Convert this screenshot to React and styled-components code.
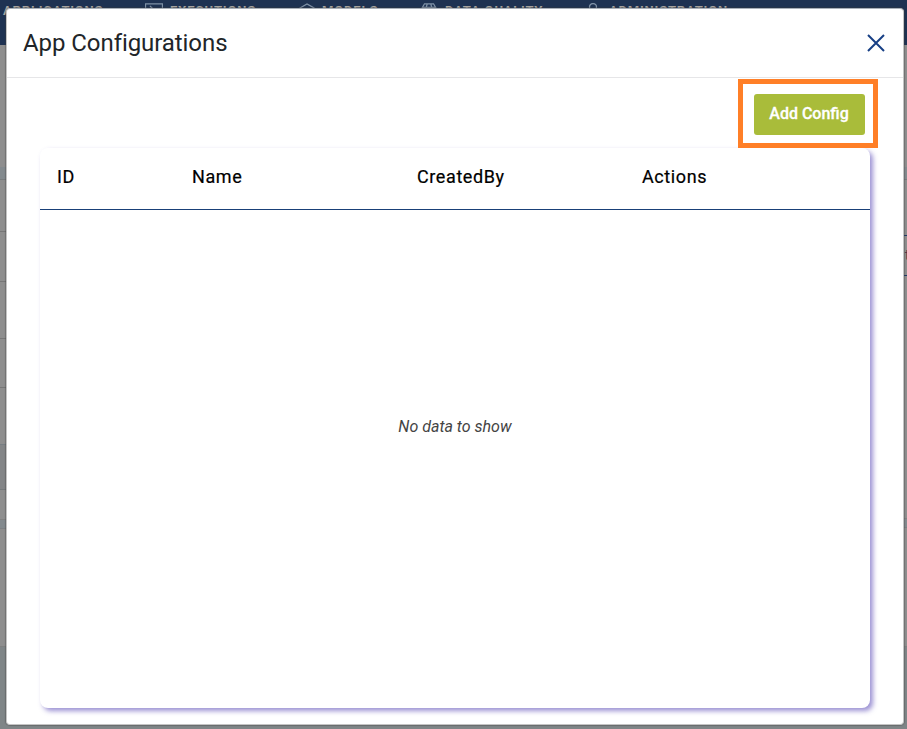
import React from "react";
import styled, { createGlobalStyle } from "styled-components";

const GlobalStyle = createGlobalStyle`
  * { box-sizing: border-box; }
  body {
    margin: 0;
    font-family: Roboto, "Liberation Sans", sans-serif;
    overflow: hidden;
  }
`;

const Page = styled.div`
  position: relative;
  width: 907px;
  height: 729px;
  overflow: hidden;
  background: #7f8587;
`;

const NavBar = styled.nav`
  display: flex;
  height: 45px;
  padding: 3px 0 0 3px;
  background: #1e3252;
`;

const NavItem = styled.span`
  display: flex;
  flex: none;
  gap: ${(p) => p.$gap || 0}px;
  width: ${(p) => p.$width}px;
  height: 16px;
  color: #aaa7a2;
  font-size: 13px;
  font-weight: 700;
  line-height: 16px;
  white-space: nowrap;

  svg {
    flex: none;
    color: #7f91a6;
  }
`;

const NavLabel = styled.span`
  display: block;
  letter-spacing: ${(p) => p.$spacing || 0}px;
`;

const Backdrop = styled.main`
  display: flex;
  justify-content: space-between;
`;

const Side = styled.div`
  width: ${(p) => p.$width}px;
`;

const Band = styled.div`
  height: ${(p) => p.$height}px;
  background: ${(p) => p.$color || "#8e8e8e"};
  border-bottom: ${(p) => (p.$line ? `1px solid ${p.$line}` : "none")};
`;

const Field = styled.div`
  height: 41px;
  padding: 11px 0 0 1px;
  overflow: hidden;
  background: #8e8e8e;
  border-top: 1px solid #203a66;
  border-bottom: 1px solid #203a66;
  color: #563247;
  font-size: 14px;
  line-height: 16px;
`;

const Modal = styled.section`
  position: absolute;
  top: 8px;
  left: 6px;
  display: flex;
  flex-direction: column;
  width: 898px;
  height: 717px;
  padding: 1px 0 0;
  border: 1px solid #c4c4c4;
  border-top-color: #a9b0b9;
  border-radius: 4px;
  background: #fff;
  box-shadow: 0 0 1px 1px rgba(60, 60, 60, 0.35);
`;

const ModalHeader = styled.header`
  display: flex;
  flex: none;
  align-items: center;
  justify-content: space-between;
  height: 68px;
  padding: 0 17px 2px 16px;
  border-bottom: 1px solid #e6e6e8;
`;

const Title = styled.h1`
  margin: 0;
  color: #212529;
  font-size: 24px;
  font-weight: 400;
  line-height: 36px;
  letter-spacing: -0.07px;
`;

const CloseButton = styled.button`
  display: flex;
  padding: 0;
  border: 0;
  background: none;
  color: #173f85;
`;

const Toolbar = styled.div`
  display: flex;
  flex: none;
  justify-content: flex-end;
  padding: 1px 25px 0 0;
`;

const Highlight = styled.div`
  display: flex;
  align-items: flex-start;
  justify-content: center;
  width: 140px;
  height: 69px;
  padding: 10px 0 0 3px;
  border: 5px solid #ff7f27;
  z-index: 1;
`;

const AddButton = styled.button`
  width: 111px;
  height: 41px;
  padding: 0 1px 2px 0;
  border: 0;
  border-radius: 3px;
  background: #a9bc3a;
  color: #fff;
  font: 500 16px/24px Roboto, sans-serif;
  -webkit-text-stroke: 0.3px #fff;
`;

const Table = styled.div`
  display: flex;
  flex: none;
  flex-direction: column;
  width: 830px;
  height: 560px;
  margin: 0 0 0 33px;
  border-radius: 8px;
  background: #fff;
  box-shadow: 3px 3px 5px rgba(72, 54, 174, 0.55);
`;

const TableHead = styled.div`
  display: grid;
  flex: none;
  grid-template-columns: 135px 225px 225px 1fr;
  height: 62px;
  padding: 17px 0 0 17px;
  border-bottom: 1px solid #194078;
`;

const HeadCell = styled.div`
  color: #000;
  font-size: 18px;
  font-weight: 400;
  line-height: 24px;
  letter-spacing: 0.6px;
  -webkit-text-stroke: 0.2px #000;
`;

const Empty = styled.div`
  display: flex;
  align-items: flex-start;
  justify-content: center;
  padding-top: 205px;
  color: #444;
  font-size: 16px;
  font-style: italic;
  line-height: 24px;
`;

const leftBands = [
  { h: 122 },
  { h: 13, color: "#838a8e", line: "#787c7e" },
  { h: 52, line: "#777" },
  { h: 50, line: "#777" },
  { h: 57, line: "#777" },
  { h: 49, line: "#777" },
  { h: 57, line: "#777e83" },
  { h: 45, color: "#838587", line: "#75797b" },
  { h: 30, line: "#818181" },
  { h: 9, color: "#838a8e", line: "#7d8184" },
  { h: 118, line: "#7f8080" },
];

const icon = (children) => (
  <svg width="18" height="16" viewBox="0 0 18 16" fill="none" stroke="currentColor" strokeWidth="1.3">
    {children}
  </svg>
);

export default function App() {
  return (
    <Page>
      <GlobalStyle />
      <NavBar>
        <NavItem $width={142}>
          <NavLabel $spacing={0.8}>APPLICATIONS</NavLabel>
        </NavItem>
        <NavItem $width={153} $gap={7}>
          {icon(<path d="M.5 .8h17v14H.5zM5 3l3 3-3 3" />)}
          <NavLabel $spacing={0.8}>EXECUTIONS</NavLabel>
        </NavItem>
        <NavItem $width={122} $gap={6}>
          {icon(<path d="M2 5l7-4 7 4v7l-7 3-7-3z" />)}
          <NavLabel $spacing={0.85}>MODELS</NavLabel>
        </NavItem>
        <NavItem $width={163} $gap={7}>
          {icon(<path d="M4.500 .8h9l4 7-4 7h-9l-4-7zM7.200 1L6 5v6M10.800 1l1.200 4v6M3 4.500h12" />)}
          <NavLabel $spacing={0.8}>DATA QUALITY</NavLabel>
        </NavItem>
        <NavItem $width={180} $gap={8}>
          {icon(<><circle cx="10" cy="4" r="3.500" /><path d="M3 15c0-8 14-8 14 0" /></>)}
          <NavLabel $spacing={0.8}>ADMINISTRATION</NavLabel>
        </NavItem>
      </NavBar>
      <Backdrop>
        <Side $width={6}>
          {leftBands.map((b, i) => (
            <Band key={i} $height={b.h} $color={b.color} $line={b.line} />
          ))}
        </Side>
        <Side $width={3}>
          <Band $height={122} />
          <Band $height={13} $color="#838a8e" $line="#787c7e" />
          <Band $height={55} />
          <Field>t</Field>
          <Band $height={243} $line="#818181" />
          <Band $height={9} $color="#838a8e" $line="#7d8184" />
          <Band $height={119} $line="#7f8080" />
        </Side>
      </Backdrop>
      <Modal>
        <ModalHeader>
          <Title>App Configurations</Title>
          <CloseButton aria-label="Close">
            <svg width="20" height="20" viewBox="0 0 20 20" stroke="currentColor" strokeWidth="2" fill="none">
              <path d="M2 2l16 16M18 2L2 18" />
            </svg>
          </CloseButton>
        </ModalHeader>
        <Toolbar>
          <Highlight>
            <AddButton>Add Config</AddButton>
          </Highlight>
        </Toolbar>
        <Table>
          <TableHead>
            <HeadCell>ID</HeadCell>
            <HeadCell>Name</HeadCell>
            <HeadCell>CreatedBy</HeadCell>
            <HeadCell>Actions</HeadCell>
          </TableHead>
          <Empty>No data to show</Empty>
        </Table>
      </Modal>
    </Page>
  );
}
